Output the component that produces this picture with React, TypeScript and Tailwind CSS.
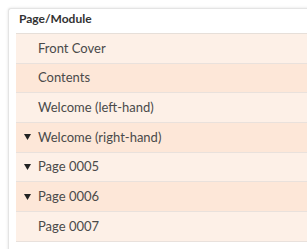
import React from 'react';

const rows = [
  { label: 'Front Cover', arrow: false },
  { label: 'Contents', arrow: false },
  { label: 'Welcome (left-hand)', arrow: false },
  { label: 'Welcome (right-hand)', arrow: true },
  { label: 'Page 0005', arrow: true },
  { label: 'Page 0006', arrow: true },
  { label: 'Page 0007', arrow: false },
];

export default function App() {
  return (
    <div className="h-[249px] w-[307px] overflow-hidden bg-white pl-2 pt-2" style={{ fontFamily: 'Lato, "Open Sans", sans-serif' }}>
      <div className="h-[260px] w-[320px] rounded-tl-[3px] border-l border-t border-[#e4e4e4] bg-white shadow-[0_0_3px_rgba(0,0,0,0.12)]">
        <div className="flex h-[24px] items-end pb-[5px] pl-[10px] text-[12px] font-bold text-[#333]">
          Page/Module
        </div>
        <div className="ml-[7px] border-t border-[#e6dfd9]">
          {rows.map((r, i) => (
            <div
              key={r.label}
              className={
                'flex h-[29.7px] items-center border-b border-[#e9e1dc] text-[13px] text-[#4a4a4a] ' +
                (i % 2 === 0 ? 'bg-[#fdf0e7]' : 'bg-[#fde7d8]')
              }
            >
              <span className="flex w-[22px] shrink-0 justify-start pl-[8px]">
                {r.arrow && (
                  <svg width="7" height="6" viewBox="0 0 7 6">
                    <path d="M0 0 L7 0 L3.5 6 Z" fill="#222" />
                  </svg>
                )}
              </span>
              <span>{r.label}</span>
            </div>
          ))}
        </div>
      </div>
    </div>
  );
}
